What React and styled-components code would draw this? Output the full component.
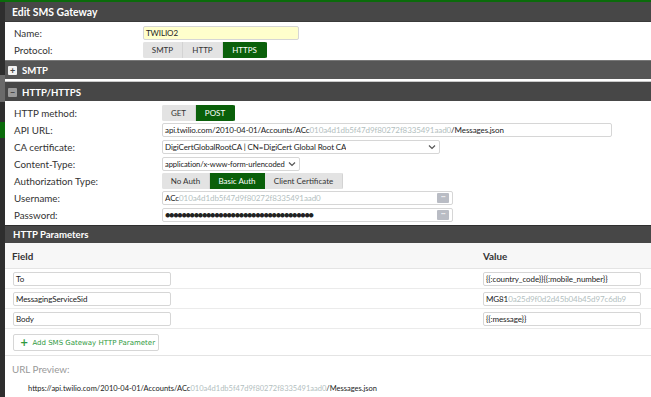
import React from "react";
import styled, { createGlobalStyle } from "styled-components";

const Global = createGlobalStyle`
  html, body { margin: 0; padding: 0; background: #fff; }
  body { font-family: Lato, "Open Sans", "Liberation Sans", sans-serif; color: #333; }
  * { box-sizing: border-box; }
`;

const Page = styled.div`
  width: 651px;
  height: 397px;
  display: flex;
  overflow: hidden;
  border-top: 2px solid #0b6b0b;
`;

const Sidebar = styled.div`
  width: 5px;
  flex-shrink: 0;
  background: #2e2e2e;
  display: flex;
  flex-direction: column;
  padding-top: 73px;
`;

const SideMark = styled.div`
  height: ${(p) => p.h}px;
  margin-bottom: ${(p) => p.mb || 0}px;
  background: ${(p) => p.color};
`;

const Main = styled.div`
  flex: 1;
  display: flex;
  flex-direction: column;
`;

const TitleBar = styled.div`
  height: 20px;
  background: #474747;
  border-bottom: 1px solid #3a3a3a;
  color: #fff;
  font-size: 10.4px;
  font-weight: 700;
  display: flex;
  align-items: center;
  padding-left: 7px;
`;

const Section = styled.div`
  display: flex;
  flex-direction: column;
  padding: ${(p) => p.pad || "2px 0 2px 9px"};
`;

const Row = styled.div`
  height: 17px;
  display: flex;
  align-items: center;
`;

const Label = styled.div`
  width: ${(p) => p.w || 129}px;
  flex-shrink: 0;
  font-size: 9.8px;
  color: #333;
`;

const Input = styled.div`
  position: relative;
  width: ${(p) => p.w}px;
  height: 14px;
  border: 1px solid #d6d6d6;
  border-radius: 2px;
  background: ${(p) => (p.yellow ? "#ffffcc" : "#fff")};
  font-size: ${(p) => (p.small ? 7.6 : 8)}px;
  letter-spacing: -0.1px;
  color: #222;
  display: flex;
  align-items: center;
  padding-left: 2px;
  white-space: nowrap;
  overflow: hidden;
`;

const Select = styled(Input)`
  justify-content: space-between;
  padding-right: 3px;
`;

const SelectText = styled.span`
  overflow: hidden;
  flex-shrink: 1;
`;

const Chevron = () => (
  <svg width="8" height="6" viewBox="0 0 8 6" style={{ flexShrink: 0, marginLeft: 3 }}>
    <path d="M1 1.5 L4 4.5 L7 1.5" fill="none" stroke="#555" strokeWidth="1.2" />
  </svg>
);

const Dots = styled.span`
  position: absolute;
  right: 3px;
  top: 1px;
  width: 12px;
  height: 10px;
  background: #b9bcc4;
  border-radius: 1px;
  color: #fff;
  font-size: 7px;
  line-height: 7px;
  text-align: center;
  letter-spacing: -0.5px;
`;

const Segments = styled.div`
  display: flex;
  height: 16px;
  border-radius: 2px;
  overflow: hidden;
  background: #e3e3e3;
`;

const Seg = styled.div`
  width: ${(p) => p.w}px;
  display: flex;
  align-items: center;
  justify-content: center;
  font-size: 8px;
  color: ${(p) => (p.active ? "#fff" : "#333")};
  background: ${(p) => (p.active ? "#0a600a" : "#e3e3e3")};
  border-right: 1px solid ${(p) => (p.active ? "#0a600a" : "#d3d3d3")};
`;

const Bar = styled.div`
  height: ${(p) => p.h || 19}px;
  background: ${(p) => p.bg || "#474747"};
  border-top: 1px solid ${(p) => p.top || "#3a3a3a"};
  color: #fff;
  font-size: 9.6px;
  font-weight: 700;
  display: flex;
  align-items: center;
  gap: 5px;
  padding-left: ${(p) => p.pl || 3}px;
`;

const Toggle = styled.span`
  width: 9px;
  height: 9px;
  border-radius: 1px;
  background: ${(p) => (p.open ? "#9b9b9b" : "#f2f2f2")};
  color: #444;
  font-size: 9px;
  line-height: 9px;
  font-weight: 700;
  text-align: center;
`;

const Gap = styled.div`
  height: 3px;
  background: #fff;
  border-bottom: 1px solid #c8c8c8;
`;

const Grid = styled.div`
  display: grid;
  grid-template-columns: 471px 1fr;
  padding-left: 7px;
`;

const HeadCell = styled.div`
  height: 26px;
  background: #f7f7f7;
  border-bottom: 1px solid #e4e4e4;
  display: flex;
  align-items: center;
  font-size: 9.8px;
  font-weight: 700;
  color: #333;
  margin-left: ${(p) => (p.first ? "-7px" : 0)};
  padding-left: ${(p) => (p.first ? "7px" : 0)};
`;

const Cell = styled.div`
  height: 20px;
  border-bottom: 1px solid #ebebeb;
  display: flex;
  align-items: center;
  margin-left: ${(p) => (p.first ? "-7px" : 0)};
  padding-left: ${(p) => (p.first ? "8px" : 0)};
`;

const AddRow = styled.div`
  height: 27px;
  border-bottom: 1px solid #e4e4e4;
  display: flex;
  align-items: center;
  padding: 1px 0 0 8px;
`;

const AddButton = styled.div`
  height: 17px;
  width: 146px;
  border: 1px solid #d6d6d6;
  border-radius: 2px;
  display: flex;
  align-items: center;
  gap: 4px;
  padding-left: 6px;
  white-space: nowrap;
  color: #2f9a3e;
  font-family: "DejaVu Sans", sans-serif;
  font-size: 7px;
`;

const Plus = styled.span`
  font-size: 10px;
  font-weight: 700;
`;

const Preview = styled.div`
  padding: 7px 0 0 7px;
  display: flex;
  flex-direction: column;
`;

const PreviewLabel = styled.div`
  font-size: 9.8px;
  color: #999;
  height: 13px;
`;

const PreviewUrl = styled.div`
  font-size: 7.5px;
  color: #222;
  padding: 8px 0 0 16px;
  white-space: nowrap;
`;

const Blur = styled.span`
  color: #9aa;
  opacity: 0.75;
`;

const sid = "ACc010a4d1db5f47d9f80272f8335491aad0";

export default function App() {
  return (
    <Page>
      <Global />
      <Sidebar>
        <SideMark h={27} mb={20} color="#6a6a6a" />
        <SideMark h={16} color="#0b6b0b" />
      </Sidebar>
      <Main>
        <TitleBar>Edit SMS Gateway</TitleBar>
        <Section>
          <Row>
            <Label>Name:</Label>
            <Input w={156} yellow>TWILIO2</Input>
          </Row>
          <Row>
            <Label>Protocol:</Label>
            <Segments>
              <Seg w={40}>SMTP</Seg>
              <Seg w={40}>HTTP</Seg>
              <Seg w={44} active>HTTPS</Seg>
            </Segments>
          </Row>
        </Section>
        <Bar bg="#565656" top="#787878" pl={3}>
          <Toggle>+</Toggle>SMTP
        </Bar>
        <Gap />
        <Bar bg="#474747" top="#474747" pl={3}>
          <Toggle open>−</Toggle>HTTP/HTTPS
        </Bar>
        <Section pad="3px 0 2px 9px">
          <Row>
            <Label w={148}>HTTP method:</Label>
            <Segments>
              <Seg w={34}>GET</Seg>
              <Seg w={39} active>POST</Seg>
            </Segments>
          </Row>
          <Row>
            <Label w={148}>API URL:</Label>
            <Input w={450}>
              api.twilio.com/2010-04-01/Accounts/ACc<Blur>010a4d1db5f47d9f80272f8335491aad0</Blur>/Messages.json
            </Input>
          </Row>
          <Row>
            <Label w={148}>CA certificate:</Label>
            <Select w={278}>
              <SelectText>DigiCertGlobalRootCA | CN=DigiCert Global Root CA</SelectText>
              <Chevron />
            </Select>
          </Row>
          <Row>
            <Label w={148}>Content-Type:</Label>
            <Select w={138} small>
              <SelectText>application/x-www-form-urlencoded</SelectText>
              <Chevron />
            </Select>
          </Row>
          <Row>
            <Label w={148}>Authorization Type:</Label>
            <Segments>
              <Seg w={48}>No Auth</Seg>
              <Seg w={55} active>Basic Auth</Seg>
              <Seg w={78}>Client Certificate</Seg>
            </Segments>
          </Row>
          <Row>
            <Label w={148}>Username:</Label>
            <Input w={291}>
              ACc<Blur>{sid.slice(3)}</Blur>
              <Dots>···</Dots>
            </Input>
          </Row>
          <Row>
            <Label w={148}>Password:</Label>
            <Input w={291}>
              <span style={{ letterSpacing: "-1.3px", fontSize: "9px" }}>{"●".repeat(36)}</span>
              <Dots>···</Dots>
            </Input>
          </Row>
        </Section>
        <Bar h={18} bg="#474747" top="#2e2e2e" pl={8}>HTTP Parameters</Bar>
        <Grid>
          <HeadCell first>Field</HeadCell>
          <HeadCell>Value</HeadCell>
          <Cell first><Input w={158}>To</Input></Cell>
          <Cell><Input w={158}>{"{{:country_code}}{{:mobile_number}}"}</Input></Cell>
          <Cell first><Input w={158}>MessagingServiceSid</Input></Cell>
          <Cell>
            <Input w={158}>
              MG81<Blur>0a25d9f0d2d45b04b45d97c6db9</Blur>
            </Input>
          </Cell>
          <Cell first><Input w={158}>Body</Input></Cell>
          <Cell><Input w={158}>{"{{:message}}"}</Input></Cell>
        </Grid>
        <AddRow>
          <AddButton>
            <Plus>+</Plus>Add SMS Gateway HTTP Parameter
          </AddButton>
        </AddRow>
        <Preview>
          <PreviewLabel>URL Preview:</PreviewLabel>
          <PreviewUrl>
            https://api.twilio.com/2010-04-01/Accounts/ACc<Blur>{sid.slice(3)}</Blur>/Messages.json
          </PreviewUrl>
        </Preview>
      </Main>
    </Page>
  );
}
